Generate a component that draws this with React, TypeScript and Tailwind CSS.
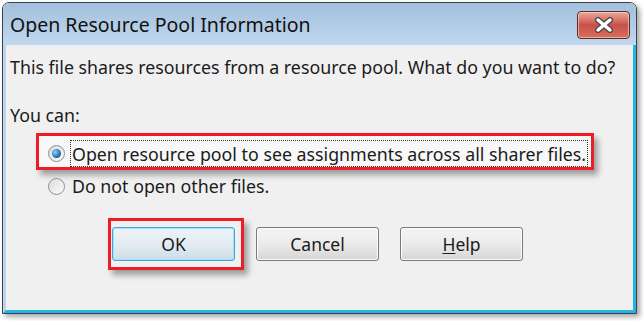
import React from 'react'

const font = { fontFamily: '"Noto Sans", "Open Sans", sans-serif' }

function Radio({ checked }: { checked?: boolean }) {
  return (
    <span className="relative flex h-[17px] w-[17px] shrink-0 items-center justify-center rounded-full border border-[#8e8f8f] bg-gradient-to-br from-[#dcdcdc] to-[#fbfbfb]">
      {checked && (
        <span className="h-[9px] w-[9px] rounded-full bg-[radial-gradient(circle_at_35%_35%,#8fd4ff,#1f6fb6_60%,#0d3e73)]" />
      )}
    </span>
  )
}

function Btn({ children, focused }: { children: React.ReactNode; focused?: boolean }) {
  return (
    <button
      className={
        'flex h-[34px] w-[123px] items-center justify-center rounded-[3px] border text-[17.5px] text-[#1b1b1b] ' +
        (focused
          ? 'border-[#3aa8db] bg-gradient-to-b from-[#eef4f8] via-[#e3ecf2] to-[#cfdde8] shadow-[inset_0_0_0_1px_#a8e0f6]'
          : 'border-[#7a7a7a] bg-gradient-to-b from-[#f4f4f4] via-[#ebebeb] to-[#d6d6d6] shadow-[inset_0_0_0_1px_#fcfcfc]')
      }
      style={font}
    >
      {children}
    </button>
  )
}

export default function App() {
  return (
    <div className="h-[321px] w-[644px] bg-white pl-[2px] pt-[2px]" style={font}>
      <div className="flex h-[312px] w-[635px] flex-col overflow-hidden rounded-t-[7px] border border-[#3e4246] shadow-[3px_3px_5px_rgba(0,0,0,0.35)]">
        {/* Title bar */}
        <div className="flex h-[42px] shrink-0 items-start justify-between bg-gradient-to-b from-[#a3bfdc] to-[#c0d8ef] pl-[7px] pr-[6px]">
          <span className="pt-[10px] text-[19.5px] leading-[24px] text-[#111]">Open Resource Pool Information</span>
          <span className="mt-[8px] flex h-[28px] w-[53px] items-center justify-center rounded-[4px] border border-[#5b2b2b] bg-gradient-to-b from-[#e9a99a] via-[#c8514a] to-[#d8705c] shadow-[inset_0_0_0_1px_rgba(255,220,210,0.6)]">
            <svg width="22" height="16" viewBox="0 0 22 16">
              <path d="M5 3 L17 13 M17 3 L5 13" stroke="#4a4a4a" strokeWidth="6" strokeLinecap="round" />
              <path d="M5 3 L17 13 M17 3 L5 13" stroke="#fff" strokeWidth="3.5" strokeLinecap="round" />
            </svg>
          </span>
        </div>

        {/* Body */}
        <div className="flex flex-1 flex-col border-l-[3px] border-r-[3px] border-b-[3px] border-l-[#bcd5ec] border-r-[#23b3e4] border-b-[#23b3e4] bg-[#f0f0f0] pl-[4px] pt-[12px] text-[17.8px] leading-[20px] text-[#1b1b1b]">
          <div>This file shares resources from a resource pool. What do you want to do?</div>
          <div className="mt-[28px]">You can:</div>

          <div className="ml-[26px] mt-[8px] flex h-[37px] w-[558px] items-end border-[3px] border-[#ee1c25] bg-[#f8f8f8] pl-[9px] shadow-[4px_5px_6px_rgba(0,0,0,0.35)]">
            <div className="flex h-[27px] items-center">
              <Radio checked />
              <span className="ml-[5px] flex h-[27px] items-center border border-dotted border-[#333] px-[1px]">
                Open resource pool to see assignments across all sharer files.
              </span>
            </div>
          </div>

          <div className="ml-[38px] mt-[6px] flex h-[20px] items-center">
            <Radio />
            <span className="ml-[7px]">Do not open other files.</span>
          </div>

          <div className="mt-[22px] flex items-center">
            <div className="ml-[98px] border-[3px] border-[#ee1c25] py-[6px] pl-[1px] pr-[6px] shadow-[4px_5px_6px_rgba(0,0,0,0.35)]">
              <Btn focused>OK</Btn>
            </div>
            <div className="ml-[12px]">
              <Btn>Cancel</Btn>
            </div>
            <div className="ml-[21px]">
              <Btn>
                <span className="underline underline-offset-2">H</span>elp
              </Btn>
            </div>
          </div>
        </div>
      </div>
    </div>
  )
}
